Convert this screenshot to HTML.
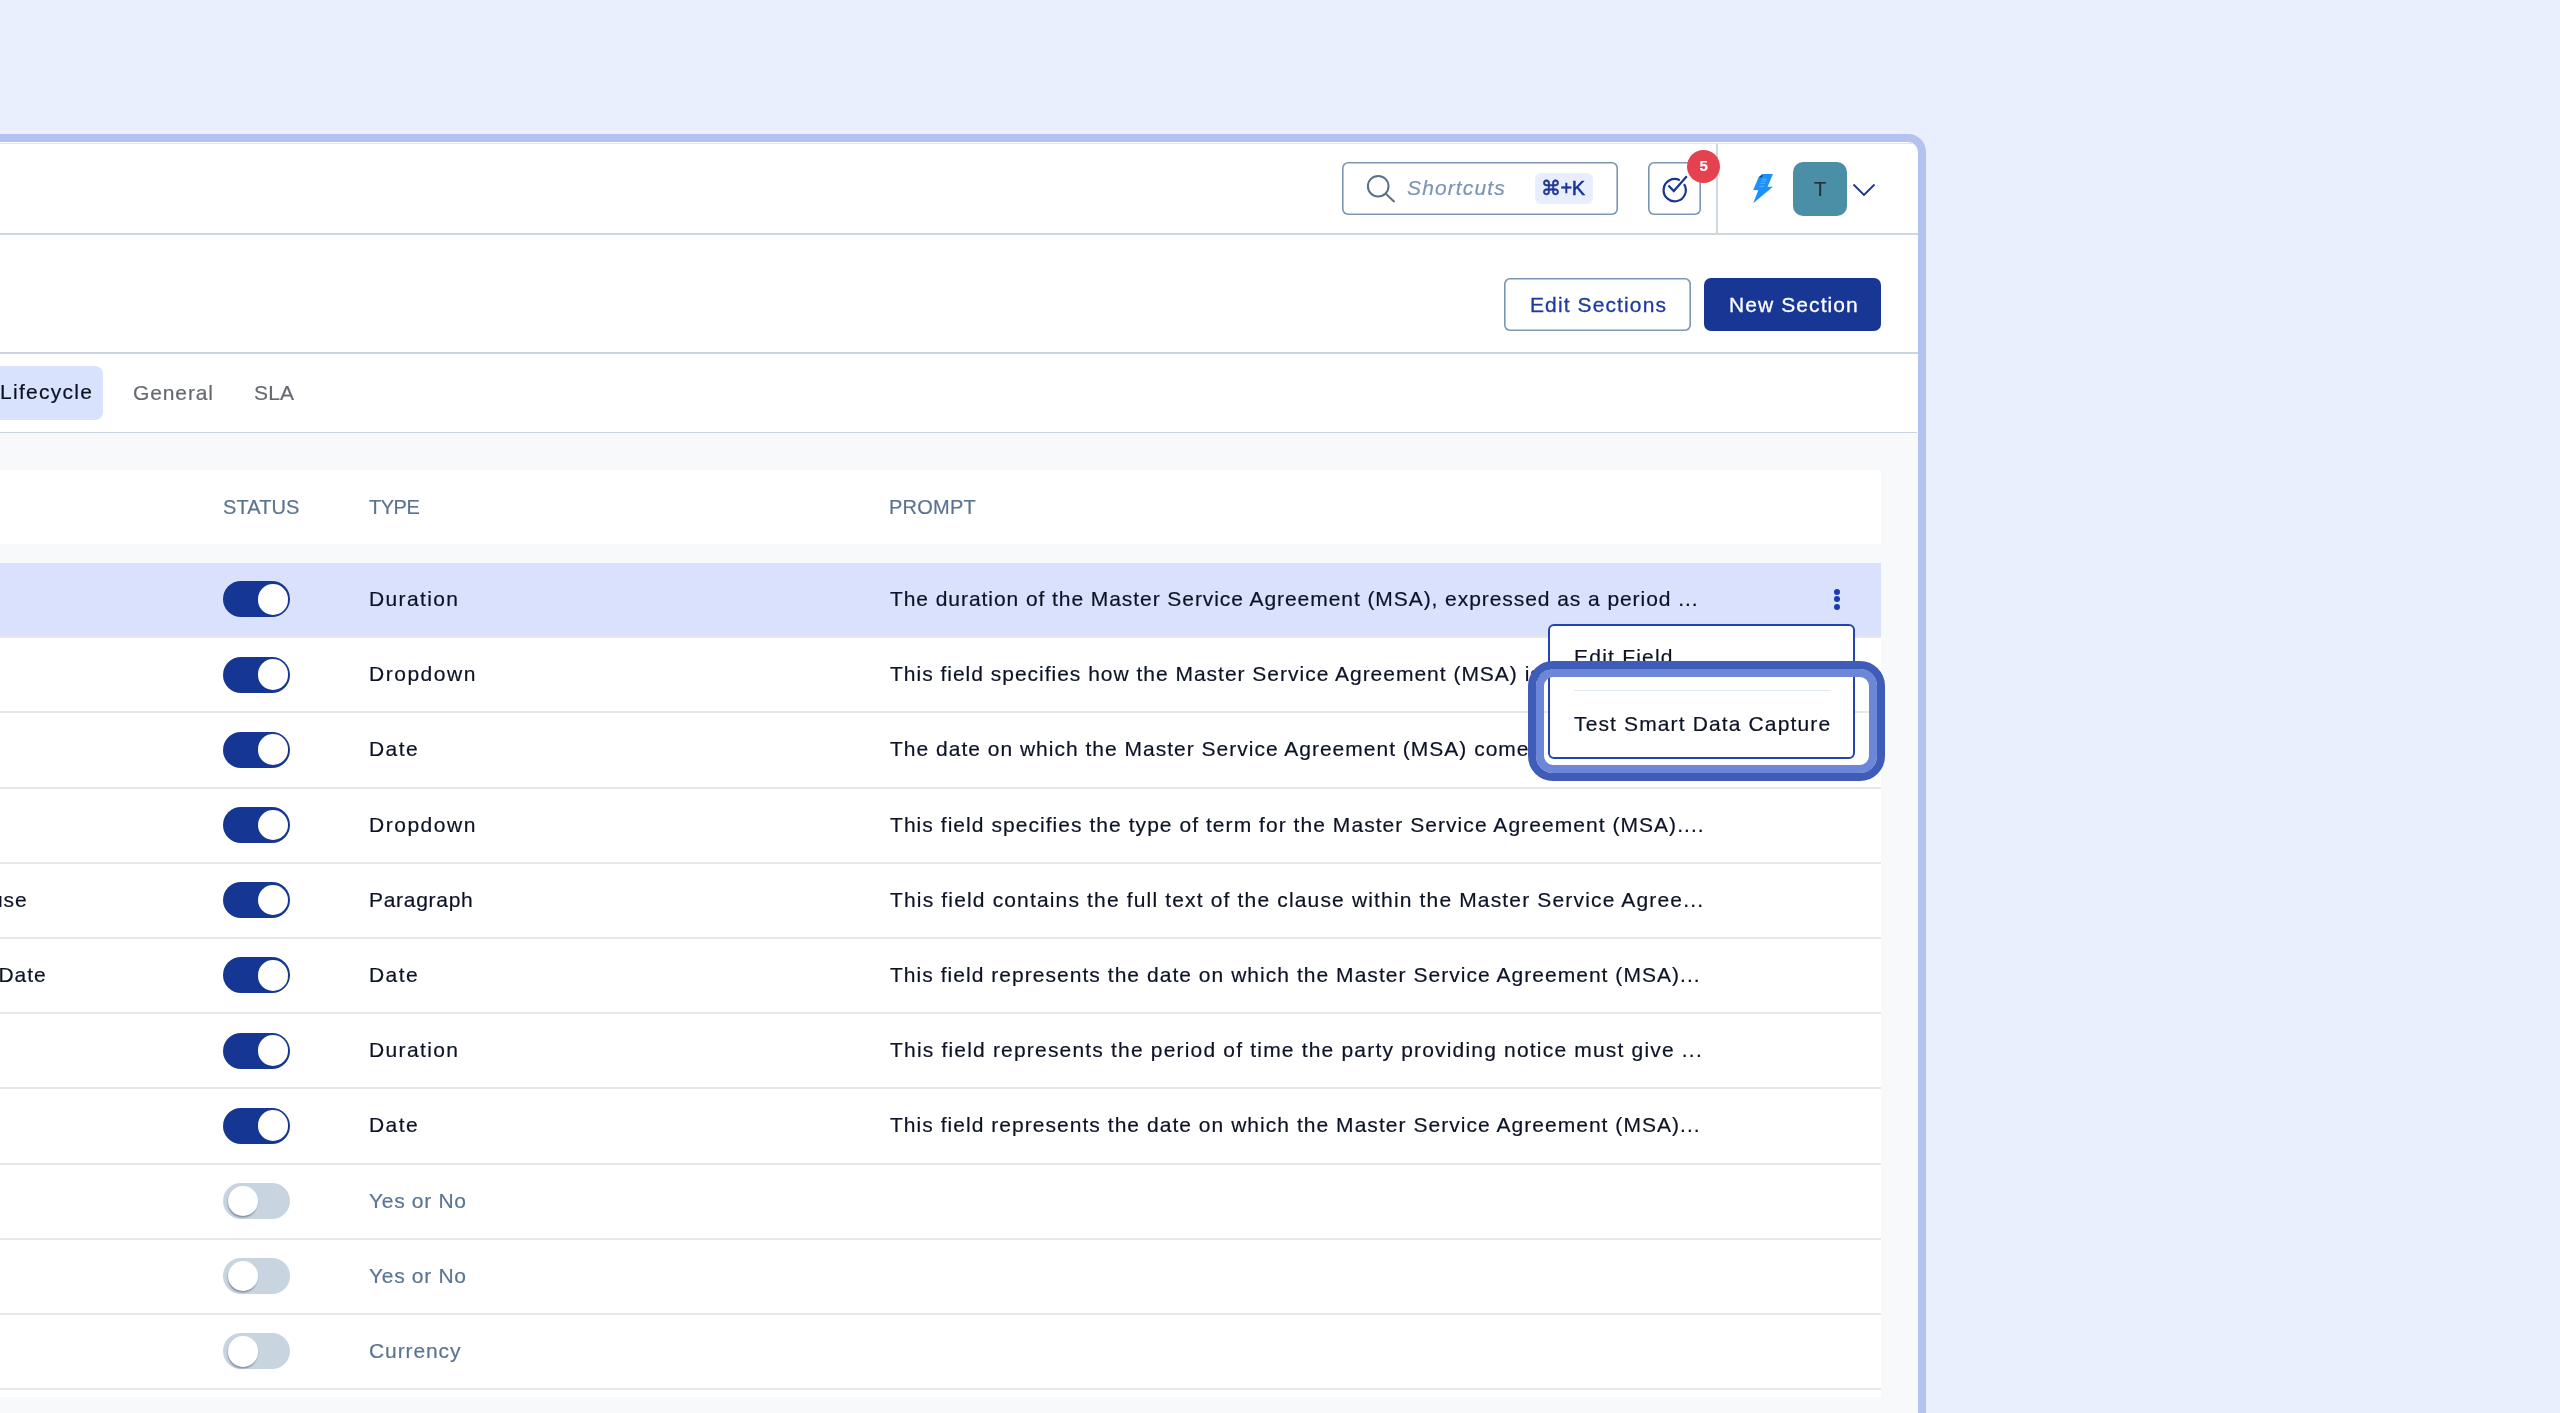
<!DOCTYPE html>
<html><head><meta charset="utf-8">
<style>
*{box-sizing:border-box;margin:0;padding:0}
html,body{width:2560px;height:1413px;overflow:hidden;background:#e9effd;font-family:"Liberation Sans",sans-serif}
.a{position:absolute}
#frame{position:absolute;left:-40px;top:134px;width:1966px;height:1400px;border:8px solid #b3c2ef;border-radius:18px;background:#fff}
.t{position:absolute;white-space:nowrap;line-height:1;-webkit-font-smoothing:antialiased;will-change:transform;-webkit-text-stroke:0.2px currentColor}
.hline{position:absolute;height:2px;background:#d3dce7}
.row{position:absolute;left:0;width:1881px}
.rb{position:absolute;left:0;width:1881px;height:2px;background:#e8e8e8}
.tg{position:absolute;left:223px;width:67px;height:36px;border-radius:18px;background:#163694}
.tg i{position:absolute;top:2.8px;left:34.5px;width:30.5px;height:30.5px;border-radius:50%;background:#fff}
.tg.off{background:#c9d4e1}
.tg.off i{left:4.5px;box-shadow:-0.4px 1.6px 1.4px rgba(40,50,70,.4)}
.ty{position:absolute;left:369px;font-size:21px;color:#0d1326}
.ty.g{color:#5a7592}
.pr{position:absolute;left:890px;font-size:21px;color:#0d1326}
.nm{font-size:21px;letter-spacing:1px;color:#0d1326}
.hd{font-size:20px;color:#5b7390}
</style></head><body>
<div id="frame"></div>
<div class="a" style="left:0;top:143px;width:1912px;height:1px;background:#e1e4e1"></div>
<div class="hline" style="left:0;top:233px;width:1918px;background:#cdd7e3"></div>
<div class="a" style="left:1716px;top:144px;width:2px;height:90px;background:#cdd7e3"></div>

<div class="a" style="left:1342px;top:162px;width:276px;height:53px;box-shadow:inset 0 0 0 1.6px #7d96b2;border-radius:6px"></div>
<svg class="a" style="left:1360px;top:168px" width="44" height="40" viewBox="0 0 44 40">
 <circle cx="18.2" cy="18.2" r="10.3" fill="none" stroke="#5a7088" stroke-width="2"/>
 <line x1="25.5" y1="25.5" x2="34.5" y2="34" stroke="#5a7088" stroke-width="2"/>
</svg>
<div class="t" style="left:1407px;top:177px;font-size:21px;font-style:italic;color:#7b95b4;letter-spacing:1.125px">Shortcuts</div>
<div class="a" style="left:1535px;top:173px;width:58px;height:31px;border-radius:6px;background:#e8eefd"></div>
<div class="t" style="left:1541px;top:178px;font-size:20px;color:#1a3594;letter-spacing:-0.5px;-webkit-text-stroke:0.5px #1a3594">⌘+K</div>

<div class="a" style="left:1648px;top:162px;width:53px;height:53px;box-shadow:inset 0 0 0 1.6px #7d96b2;border-radius:6px"></div>
<svg class="a" style="left:1655px;top:165px" width="40" height="45" viewBox="0 0 40 45">
 <path d="M24.8,15.3 A11.1,11.1 0 1 0 29,19.1" fill="none" stroke="#1a3594" stroke-width="2.2"/>
 <path d="M13.4,20.4 L18.8,26.1 L31.8,11.3" fill="none" stroke="#1a3594" stroke-width="2.2"/>
</svg>
<div class="a" style="left:1686.8px;top:149.6px;width:33.2px;height:33.2px;border-radius:50%;background:#e5414f"></div>
<div class="t" style="left:1686.8px;width:33.2px;text-align:center;top:158px;font-size:15px;font-weight:bold;color:#fff">5</div>

<svg class="a" style="left:1745px;top:168px" width="40" height="40" viewBox="0 0 40 40">
 <path d="M13.6,9.3 L17.8,6.1 L28,6.1 L22.6,18.7 L27.9,18.7 L8.2,35.2 L13.3,22.2 L8.2,22 Z" fill="#1e90fb"/>
 <path d="M13.6,9.3 L17.8,6.1 L17,9.2 Z" fill="#0b3b8c"/>
 <g stroke="#6ab5ff" stroke-width="0.8"><line x1="17.3" y1="11.3" x2="22" y2="11.3"/><line x1="16.3" y1="13.2" x2="21" y2="13.2"/><line x1="15.2" y1="15.4" x2="20" y2="15.4"/><line x1="14.2" y1="18.4" x2="19" y2="18.4"/></g>
</svg>
<div class="a" style="left:1793px;top:162px;width:54px;height:54px;border-radius:10px;background:#4a8fa5"></div>
<div class="t" style="left:1793px;width:54px;text-align:center;top:179px;font-size:20px;color:#2b2f33">T</div>
<svg class="a" style="left:1850px;top:180px" width="28" height="20" viewBox="0 0 28 20">
 <path d="M3.5,4.5 L14,15 L24.5,4.5" fill="none" stroke="#1a3594" stroke-width="1.8"/>
</svg>

<div class="hline" style="left:0;top:352px;width:1918px;height:1.6px;background:#c9d4e0"></div>
<div class="a" style="left:1504px;top:278px;width:187px;height:53px;box-shadow:inset 0 0 0 1.6px #7d96b2;border-radius:6px"></div>
<div class="t" style="left:1530px;top:294px;font-size:21px;color:#1e3a9a;-webkit-text-stroke:0.3px #1e3a9a;letter-spacing:1.113px">Edit Sections</div>
<div class="a" style="left:1703.5px;top:278px;width:177.5px;height:53px;border-radius:7px;background:#183693"></div>
<div class="t" style="left:1728.5px;top:294px;font-size:21px;color:#fff;-webkit-text-stroke:0.3px #fff;letter-spacing:1.090px">New Section</div>

<div class="a" style="left:-10px;top:365.5px;width:113px;height:54px;border-radius:8px;background:#d9e2fd"></div>
<div class="t" style="left:0.4px;top:381.3px;font-size:21px;color:#0c1120;letter-spacing:1.275px">Lifecycle</div>
<div class="t" style="left:133px;top:382px;font-size:21px;color:#666a70;letter-spacing:0.883px">General</div>
<div class="t" style="left:254px;top:382px;font-size:21px;color:#666a70;letter-spacing:0.200px">SLA</div>
<div class="hline" style="left:0;top:431.7px;width:1917px;height:1.6px;background:#c9d4e0"></div>

<div class="a" style="left:0;top:433.3px;width:1918px;height:980px;background:#f8f9fb"></div>
<div class="a" style="left:0;top:470px;width:1881px;height:74px;background:#fff"></div>
<div class="t hd" style="left:222.5px;top:496.5px;letter-spacing:0.100px">STATUS</div>
<div class="t hd" style="left:368.5px;top:496.5px;letter-spacing:-0.467px">TYPE</div>
<div class="t hd" style="left:889px;top:496.5px;letter-spacing:0.240px">PROMPT</div>
<div class="row" style="top:562.90px;height:75.20px;background:#d9e1fd"></div>
<div class="rb" style="top:636.10px"></div>
<div class="tg" style="top:581.30px"><i></i></div>
<div class="t ty" style="top:587.90px;letter-spacing:1.357px">Duration</div>
<div class="t pr" style="top:587.90px;letter-spacing:0.934px">The duration of the Master Service Agreement (MSA), expressed as a period ...</div>
<div class="row" style="top:638.10px;height:75.20px;background:#fff"></div>
<div class="rb" style="top:711.30px"></div>
<div class="tg" style="top:656.50px"><i></i></div>
<div class="t ty" style="top:663.10px;letter-spacing:1.514px">Dropdown</div>
<div class="t pr" style="top:663.10px;letter-spacing:0.988px">This field specifies how the Master Service Agreement (MSA) is renewed at the end o...</div>
<div class="row" style="top:713.30px;height:75.20px;background:#fff"></div>
<div class="rb" style="top:786.50px"></div>
<div class="tg" style="top:731.70px"><i></i></div>
<div class="t ty" style="top:738.30px;letter-spacing:1.400px">Date</div>
<div class="t pr" style="top:738.30px;letter-spacing:1.002px">The date on which the Master Service Agreement (MSA) comes into effect an...</div>
<div class="row" style="top:788.50px;height:75.20px;background:#fff"></div>
<div class="rb" style="top:861.70px"></div>
<div class="tg" style="top:806.90px"><i></i></div>
<div class="t ty" style="top:813.50px;letter-spacing:1.514px">Dropdown</div>
<div class="t pr" style="top:813.50px;letter-spacing:1.051px">This field specifies the type of term for the Master Service Agreement (MSA)....</div>
<div class="row" style="top:863.70px;height:75.20px;background:#fff"></div>
<div class="rb" style="top:936.90px"></div>
<div class="tg" style="top:882.10px"><i></i></div>
<div class="t ty" style="top:888.70px;letter-spacing:0.713px">Paragraph</div>
<div class="t pr" style="top:888.70px;letter-spacing:1.160px">This field contains the full text of the clause within the Master Service Agree...</div>
<div class="t nm" style="right:2532.5px;top:888.70px">Termination Clause</div>
<div class="row" style="top:938.90px;height:75.20px;background:#fff"></div>
<div class="rb" style="top:1012.10px"></div>
<div class="tg" style="top:957.30px"><i></i></div>
<div class="t ty" style="top:963.90px;letter-spacing:1.400px">Date</div>
<div class="t pr" style="top:963.90px;letter-spacing:1.039px">This field represents the date on which the Master Service Agreement (MSA)...</div>
<div class="t nm" style="right:2513.5px;top:963.90px">Termination Date</div>
<div class="row" style="top:1014.10px;height:75.20px;background:#fff"></div>
<div class="rb" style="top:1087.30px"></div>
<div class="tg" style="top:1032.50px"><i></i></div>
<div class="t ty" style="top:1039.10px;letter-spacing:1.357px">Duration</div>
<div class="t pr" style="top:1039.10px;letter-spacing:1.188px">This field represents the period of time the party providing notice must give ...</div>
<div class="row" style="top:1089.30px;height:75.20px;background:#fff"></div>
<div class="rb" style="top:1162.50px"></div>
<div class="tg" style="top:1107.70px"><i></i></div>
<div class="t ty" style="top:1114.30px;letter-spacing:1.400px">Date</div>
<div class="t pr" style="top:1114.30px;letter-spacing:1.039px">This field represents the date on which the Master Service Agreement (MSA)...</div>
<div class="row" style="top:1164.50px;height:75.20px;background:#fff"></div>
<div class="rb" style="top:1237.70px"></div>
<div class="tg off" style="top:1182.90px"><i></i></div>
<div class="t ty g" style="top:1189.50px;letter-spacing:0.688px">Yes or No</div>
<div class="row" style="top:1239.70px;height:75.20px;background:#fff"></div>
<div class="rb" style="top:1312.90px"></div>
<div class="tg off" style="top:1258.10px"><i></i></div>
<div class="t ty g" style="top:1264.70px;letter-spacing:0.688px">Yes or No</div>
<div class="row" style="top:1314.90px;height:75.20px;background:#fff"></div>
<div class="rb" style="top:1388.10px"></div>
<div class="tg off" style="top:1333.30px"><i></i></div>
<div class="t ty g" style="top:1339.90px;letter-spacing:0.900px">Currency</div>
<div class="a" style="left:0;top:1390.10px;width:1881px;height:6.90px;background:#fff"></div>
<div class="a" style="left:1834.3px;top:588.9px;width:6px;height:6px;border-radius:50%;background:#1a3bb0"></div>
<div class="a" style="left:1834.3px;top:596.4px;width:6px;height:6px;border-radius:50%;background:#1a3bb0"></div>
<div class="a" style="left:1834.3px;top:603.9px;width:6px;height:6px;border-radius:50%;background:#1a3bb0"></div>
<div class="a" style="left:1548px;top:623.5px;width:307px;height:135px;border:2px solid #2244b0;border-radius:6px;background:#fff;overflow:hidden">
 <div class="t" style="left:24px;top:20.5px;font-size:21px;letter-spacing:1.222px;color:#0d1326">Edit Field</div>
 <div class="a" style="left:24px;top:64.8px;width:257px;height:1.2px;background:#e3e9f2"></div>
 <div class="t" style="left:24px;top:87.5px;font-size:21px;letter-spacing:1.136px;color:#0d1326">Test Smart Data Capture</div>
</div>
<div class="a" style="left:1528px;top:661px;width:357px;height:120px;border:8px solid #3e5cb8;border-radius:25px;box-shadow:inset 0 0 0 8px #6c87d8"></div>
</body></html>
